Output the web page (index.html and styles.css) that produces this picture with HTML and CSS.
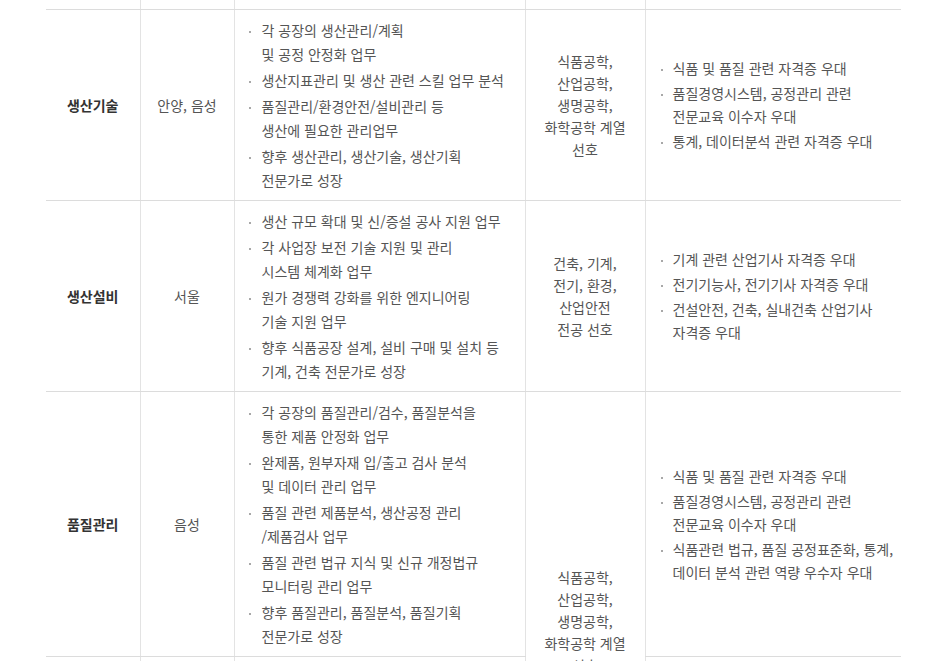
FILE: index.html
```html
<!DOCTYPE html>
<html lang="ko">
<head>
<meta charset="utf-8">
<title>직무 소개</title>
<link rel="stylesheet" href="styles.css">
</head>
<body>
<div class="wrap">
<table class="jobs">
  <colgroup>
    <col class="c-name"><col class="c-place"><col class="c-task"><col class="c-major"><col class="c-pref">
  </colgroup>
  <tbody>
    <tr class="spacer"><td></td><td></td><td></td><td></td><td></td></tr>
    <tr>
      <td class="name">생산기술</td>
      <td class="place">안양, 음성</td>
      <td class="task">
        <ul>
          <li><span>각 공장의 생산관리/계획<br>및 공정 안정화 업무</span></li>
          <li><span>생산지표관리 및 생산 관련 스킬 업무 분석</span></li>
          <li><span>품질관리/환경안전/설비관리 등<br>생산에 필요한 관리업무</span></li>
          <li><span>향후 생산관리, 생산기술, 생산기획<br>전문가로 성장</span></li>
        </ul>
      </td>
      <td class="major">식품공학,<br>산업공학,<br>생명공학,<br>화학공학 계열<br>선호</td>
      <td class="pref">
        <ul>
          <li><span>식품 및 품질 관련 자격증 우대</span></li>
          <li><span>품질경영시스템, 공정관리 관련<br>전문교육 이수자 우대</span></li>
          <li><span>통계, 데이터분석 관련 자격증 우대</span></li>
        </ul>
      </td>
    </tr>
    <tr>
      <td class="name">생산설비</td>
      <td class="place">서울</td>
      <td class="task">
        <ul>
          <li><span>생산 규모 확대 및 신/증설 공사 지원 업무</span></li>
          <li><span>각 사업장 보전 기술 지원 및 관리<br>시스템 체계화 업무</span></li>
          <li><span>원가 경쟁력 강화를 위한 엔지니어링<br>기술 지원 업무</span></li>
          <li><span>향후 식품공장 설계, 설비 구매 및 설치 등<br>기계, 건축 전문가로 성장</span></li>
        </ul>
      </td>
      <td class="major">건축, 기계,<br>전기, 환경,<br>산업안전<br>전공 선호</td>
      <td class="pref">
        <ul>
          <li><span>기계 관련 산업기사 자격증 우대</span></li>
          <li><span>전기기능사, 전기기사 자격증 우대</span></li>
          <li><span>건설안전, 건축, 실내건축 산업기사<br>자격증 우대</span></li>
        </ul>
      </td>
    </tr>
    <tr>
      <td class="name">품질관리</td>
      <td class="place">음성</td>
      <td class="task">
        <ul>
          <li><span>각 공장의 품질관리/검수, 품질분석을<br>통한 제품 안정화 업무</span></li>
          <li><span>완제품, 원부자재 입/출고 검사 분석<br>및 데이터 관리 업무</span></li>
          <li><span>품질 관련 제품분석, 생산공정 관리<br>/제품검사 업무</span></li>
          <li><span>품질 관련 법규 지식 및 신규 개정법규<br>모니터링 관리 업무</span></li>
          <li><span>향후 품질관리, 품질분석, 품질기획<br>전문가로 성장</span></li>
        </ul>
      </td>
      <td class="major" rowspan="2">식품공학,<br>산업공학,<br>생명공학,<br>화학공학 계열<br>선호</td>
      <td class="pref">
        <ul>
          <li><span>식품 및 품질 관련 자격증 우대</span></li>
          <li><span>품질경영시스템, 공정관리 관련<br>전문교육 이수자 우대</span></li>
          <li><span>식품관련 법규, 품질 공정표준화, 통계,<br>데이터 분석 관련 역량 우수자 우대</span></li>
        </ul>
      </td>
    </tr>
    <tr class="next">
      <td class="name"></td>
      <td class="place"></td>
      <td class="task"></td>
      <td class="pref"></td>
    </tr>
  </tbody>
</table>
</div>
</body>
</html>
```

FILE: styles.css
```css
html, body {
  margin: 0;
  padding: 0;
  background: #fff;
}

body {
  font-family: "Noto Sans CJK KR", "Noto Sans", sans-serif;
  font-size: 14px;
  color: #555;
  overflow: hidden;
}

.wrap {
  padding-left: 46px;
}

.jobs {
  width: 855px;
  border-collapse: collapse;
  table-layout: fixed;
}

.c-name { width: 94px; }
.c-place { width: 94px; }
.c-task { width: 291px; }
.c-major { width: 120px; }
.c-pref { width: 256px; }

.jobs td {
  border-bottom: 1px solid #dcdcdc;
  border-left: 1px solid #e3e3e3;
  padding: 8px 0;
  vertical-align: middle;
  line-height: 24px;
}

.jobs td:first-child {
  border-left: 0;
}

.jobs tr.spacer td {
  height: 9px;
  padding: 0;
  line-height: 0;
}

.jobs tr.next td {
  height: 178px;
  border-bottom: 0;
}

.name {
  text-align: center;
  font-weight: bold;
  color: #333;
}

.place {
  text-align: center;
}

.major {
  text-align: center;
  line-height: 22px !important;
}

.task {
  padding-left: 14px !important;
}

.pref {
  padding-left: 15px !important;
}

.jobs ul {
  list-style: none;
  margin: 0;
  padding: 0;
}

.jobs li {
  display: flex;
  align-items: flex-start;
}

.jobs li::before {
  content: "";
  flex: 0 0 auto;
  width: 2px;
  height: 2px;
  margin-top: 13px;
  margin-right: 11px;
  background: #a8a8a8;
}

.task li + li {
  margin-top: 2px;
}

.pref li {
  line-height: 23px;
}

.pref li::before {
  margin-top: 12px;
  margin-right: 10px;
}

.pref li + li {
  margin-top: 2px;
}
```
